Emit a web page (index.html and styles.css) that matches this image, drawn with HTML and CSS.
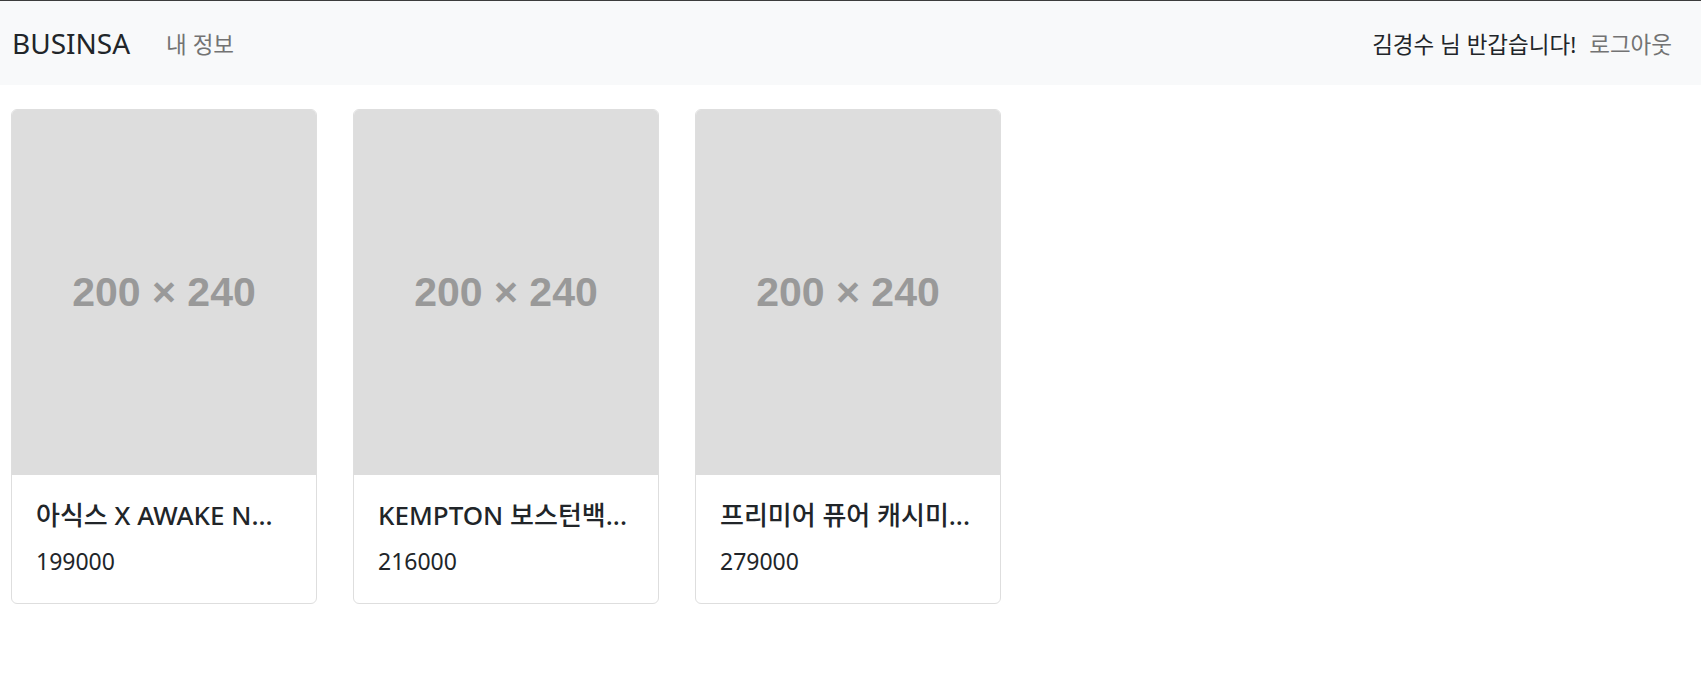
FILE: index.html
```html
<!DOCTYPE html>
<html lang="ko">
<head>
<meta charset="utf-8">
<title>BUSINSA</title>
<link rel="stylesheet" href="styles.css">
</head>
<body>
<nav class="navbar">
  <div class="nav-left">
    <a class="brand" href="#">BUSINSA</a>
    <a class="nav-link" href="#">내 정보</a>
  </div>
  <div class="nav-right">
    <span class="greeting">김경수 님 반갑습니다!</span>
    <a class="nav-link" href="#">로그아웃</a>
  </div>
</nav>
<main class="products">
  <div class="card">
    <div class="card-img"><span>200 × 240</span></div>
    <div class="card-body">
      <h5 class="card-title">아식스 X AWAKE N...</h5>
      <p class="card-price">199000</p>
    </div>
  </div>
  <div class="card">
    <div class="card-img"><span>200 × 240</span></div>
    <div class="card-body">
      <h5 class="card-title">KEMPTON 보스턴백...</h5>
      <p class="card-price">216000</p>
    </div>
  </div>
  <div class="card">
    <div class="card-img"><span>200 × 240</span></div>
    <div class="card-body">
      <h5 class="card-title">프리미어 퓨어 캐시미...</h5>
      <p class="card-price">279000</p>
    </div>
  </div>
</main>
</body>
</html>
```

FILE: styles.css
```css
html, body {
  margin: 0;
  padding: 0;
  background: #fff;
}
body {
  font-family: "Noto Sans", "Noto Sans CJK KR", sans-serif;
  color: #212529;
  border-top: 1px solid #3c3c3c;
}
a {
  text-decoration: none;
}
.navbar {
  height: 84px;
  background: #f8f9fa;
  display: flex;
  align-items: center;
  justify-content: space-between;
  padding: 0 29px 0 12px;
}
.nav-left, .nav-right {
  display: flex;
  align-items: center;
}
.brand {
  font-size: 28px;
  color: #212529;
  margin-right: 36px;
}
.nav-link {
  font-size: 22.5px;
  color: #737373;
}
.greeting {
  font-size: 22.5px;
  color: #212529;
  margin-right: 13px;
}
.products {
  display: flex;
  gap: 36px;
  padding: 24px 11px;
}
.card {
  width: 306px;
  border: 1px solid #dedede;
  border-radius: 6px;
  overflow: hidden;
  box-sizing: border-box;
}
.card-img {
  height: 366px;
  background: #dddddd;
  display: flex;
  align-items: center;
  justify-content: center;
  margin: -1px -1px 0;
}
.card-img span {
  font-family: "Liberation Sans", Arial, sans-serif;
  font-weight: 700;
  font-size: 41px;
  color: #999999;
}
.card-body {
  padding: 24px 24px;
}
.card-title {
  margin: 0 0 12px;
  font-size: 26px;
  font-weight: 500;
  line-height: 32px;
  white-space: nowrap;
  color: #212529;
}
.card-price {
  margin: 0;
  font-size: 23px;
  line-height: 36px;
  color: #212529;
}
```
